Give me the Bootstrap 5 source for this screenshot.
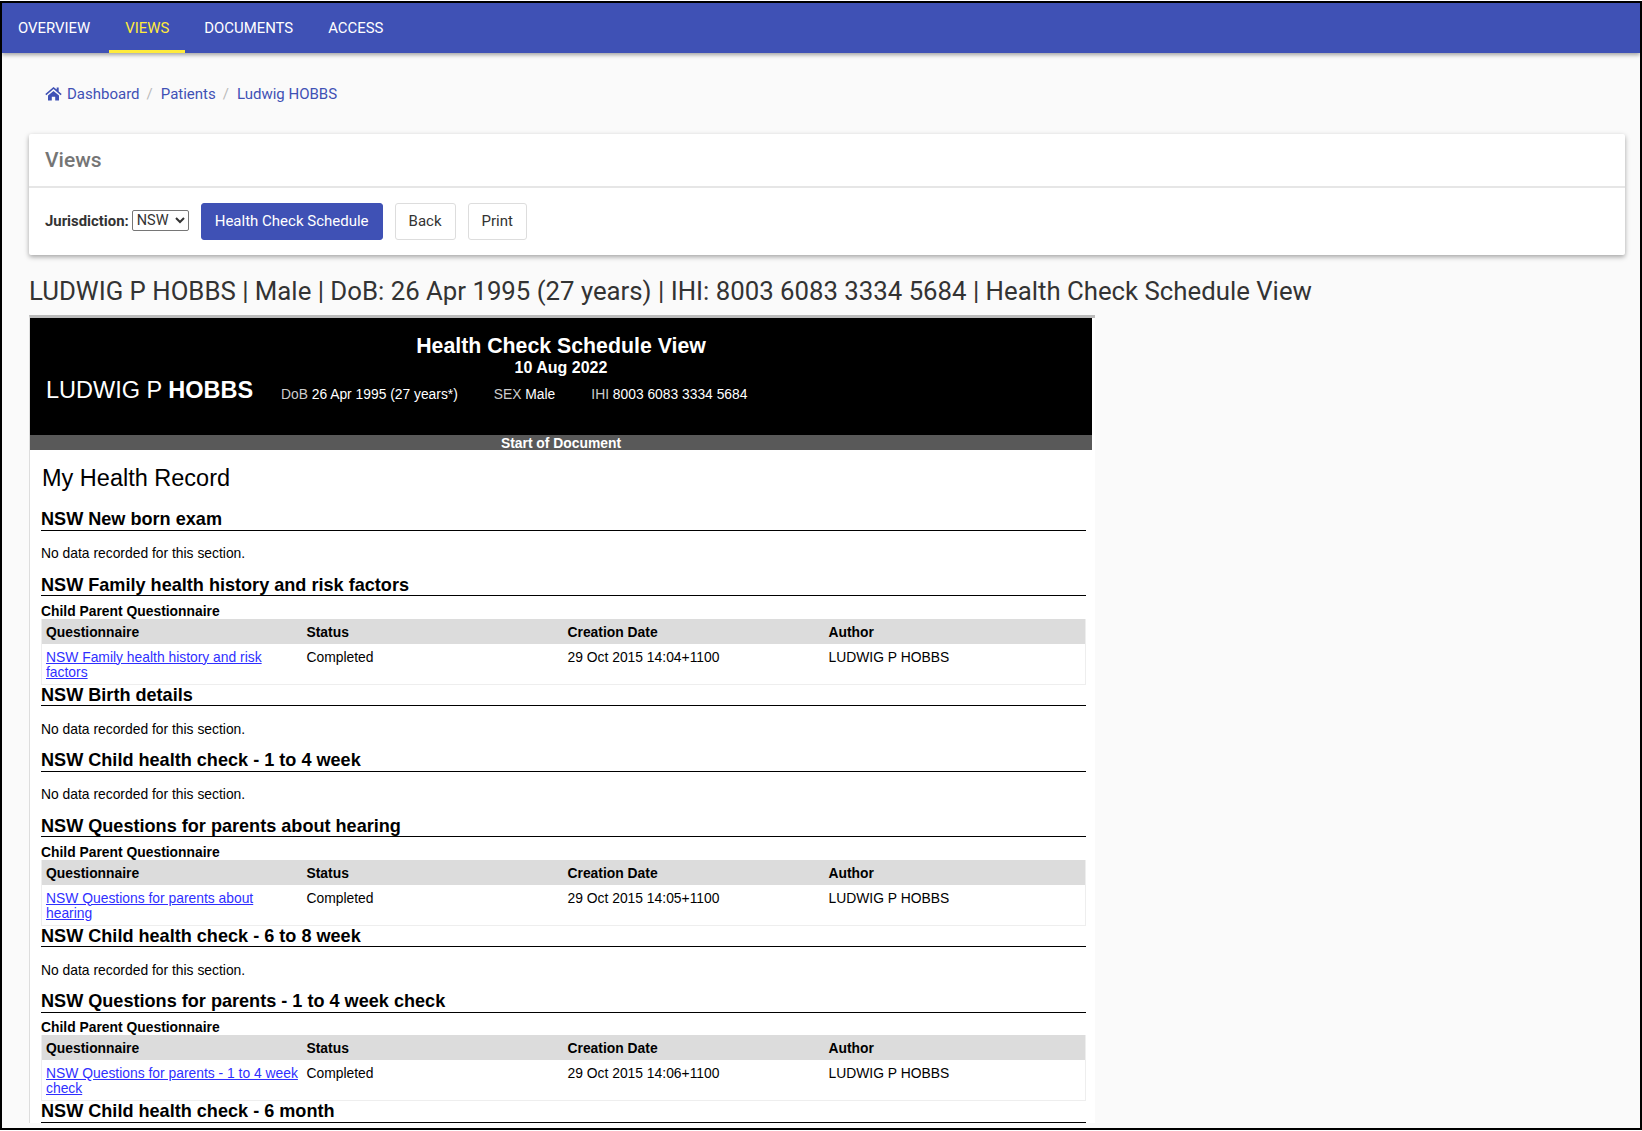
<!doctype html>
<html lang="en">
<head>
  <meta charset="utf-8">
  <title>Health Check Schedule View</title>
  <meta name="viewport" content="width=device-width, initial-scale=1">
  <link href="https://cdn.jsdelivr.net/npm/bootstrap@5.3.3/dist/css/bootstrap.min.css" rel="stylesheet">
  <style>
    html, body { height: 100%; background: #fff; overflow: hidden; }
    body { font-family: Roboto, "Liberation Sans", sans-serif; }
    .app-frame { height: 1129px; margin: 1px 0 0 0; border: 2px solid #000; background: #fafafa; overflow: hidden; }
    .app-nav { height: 50px; padding: 0; background: #3f51b5; box-shadow: 0 2px 4px rgba(0,0,0,.35); gap: 3px; }
    .app-nav .nav-link { height: 50px; padding: 0 16px; line-height: 51px; font-size: 14.9px; color: #fff; text-transform: uppercase; border-bottom: 3px solid transparent; }
    .app-nav .nav-link.active { color: #ffeb3b; border-bottom-color: #ffeb3b; }
    .app-main { padding: 0 15px 0 27px; }
    .crumbs { height: 81px; margin: 0; padding: 30px 0 0 16px; font-size: 15px; line-height: 22px; }
    .crumbs a { color: #3f51b5; text-decoration: none; }
    .crumbs .breadcrumb-item + .breadcrumb-item { padding-left: 7px; }
    .crumbs .breadcrumb-item + .breadcrumb-item::before { padding-right: 8px; color: #bbb; }
    .crumbs svg { margin-right: 5px; vertical-align: -2px; }
    .views-card { border: 0; border-radius: 2px; box-shadow: 0 2px 5px rgba(0,0,0,.35); }
    .views-card .card-header { height: 54px; padding: 0 16px; background: #fff; border-bottom: 2px solid #e6e6e6; font-size: 21px; font-weight: 500; line-height: 52px; color: #757575; }
    .views-card .card-body { height: 67px; padding: 15px 16px 16px; gap: 12px; }
    .juris-label { font-size: 14.9px; font-weight: 700; color: #333; margin: 0 3px 0 0; }
    .juris-select { height: 21px; width: 57px; font-size: 14.5px; font-family: Roboto, sans-serif; border: 1px solid #767676; border-radius: 2px; background: #fff; color: #333; }
    .btn-app { height: 37px; padding: 0 13px; font-size: 15px; line-height: 35px; border-radius: 3px; color: #333; background: #fff; border: 1px solid #ddd; }
    .btn-app.is-main { background: #3f51b5; border-color: #3f51b5; color: #fff; }
    .patient-line { margin: 17px 0 5px; font-size: 25.78px; font-weight: 400; line-height: 38px; color: #333; white-space: nowrap; }
    .doc-pane { width: 1066px; border-top: 3px solid #bbb; border-left: 1px solid #ddd; background: #fff; font-family: "Liberation Sans", Arial, sans-serif; font-size: 13.87px; color: #000; }
    .doc-inner { width: 1062px; background: #fff; }
    .doc-head { height: 117px; background: #000; color: #fff; text-align: center; padding-top: 16px; }
    .doc-title { font-size: 21.3px; font-weight: 700; line-height: 25px; }
    .doc-date { font-size: 16px; font-weight: 700; line-height: 18px; }
    .doc-person { padding: 0 0 0 16px; text-align: left; align-items: center; height: 26px; gap: 36px; }
    .doc-name { font-size: 23.5px; line-height: 28px; width: 199px; white-space: nowrap; }
    .doc-fact { font-size: 13.83px; color: #ccc; white-space: nowrap; margin-top: 8px; }
    .doc-fact b { font-weight: 400; color: #fff; }
    .doc-bar { height: 15px; background: #595959; color: #fff; text-align: center; font-weight: 700; line-height: 16px; }
    .doc-body { padding: 0 6px 0 11px; }
    .doc-record { font-size: 23.5px; font-weight: 400; margin: 0; padding: 12px 0 0 1px; height: 59px; line-height: 32px; }
    .doc-sec { margin: 0; height: 21.5px; font-size: 18.1px; font-weight: 700; line-height: 20px; border-bottom: 1.5px solid #000; }
    .doc-none { margin: 0; padding: 15.5px 0 13.5px; line-height: 15px; }
    .doc-sub { margin: 7.5px 0 0; font-size: 13.87px; font-weight: 700; line-height: 15px; height: 15px; }
    .doc-tbl { width: 100%; table-layout: fixed; margin: 0; border: 1px solid #eee; border-top: 0; }
    .doc-tbl th { background: #dcdcdc; padding: 6px 2px 4px 4px; line-height: 15px; font-weight: 700; }
    .doc-tbl td { padding: 6px 2px 4px 4px; line-height: 15px; vertical-align: top; height: 40px; }
    .doc-tbl a { color: #2f2fff; }
  </style>
</head>
<body>
<div class="app-frame">

  <!-- Top navigation -->
  <nav class="navbar app-nav justify-content-start">
    <a class="nav-link" href="#">Overview</a>
    <a class="nav-link active" href="#">Views</a>
    <a class="nav-link" href="#">Documents</a>
    <a class="nav-link" href="#">Access</a>
  </nav>

  <div class="app-main">
    <ol class="breadcrumb crumbs">
      <li class="breadcrumb-item"><a href="#"><svg width="17" height="15" viewBox="0 0 17 15" fill="#3f51b5"><path d="M8.5 1 .3 8l1 1.2L8.5 3.1l7.2 6.1 1-1.2-3-2.6V1.500h-2v2z"/><path d="M3 9.600V14.500h3.800V10.800h3.400v3.700H14V9.600L8.500 4.900z"/></svg>Dashboard</a></li>
      <li class="breadcrumb-item"><a href="#">Patients</a></li>
      <li class="breadcrumb-item"><a href="#">Ludwig HOBBS</a></li>
    </ol>

    <div class="card views-card">
      <div class="card-header">Views</div>
      <div class="card-body d-flex align-items-center">
        <div class="d-flex align-items-center">
          <label class="juris-label">Jurisdiction:</label>
          <select class="juris-select"><option>NSW</option></select>
        </div>
        <button class="btn btn-app is-main" type="button">Health Check Schedule</button>
        <button class="btn btn-app" type="button">Back</button>
        <button class="btn btn-app" type="button">Print</button>
      </div>
    </div>

    <h4 class="patient-line">LUDWIG P HOBBS | Male | DoB: 26 Apr 1995 (27 years) | IHI: 8003 6083 3334 5684 | Health Check Schedule View</h4>

    <!-- Embedded document -->
    <div class="doc-pane">
      <div class="doc-inner">
        <div class="doc-head">
          <div class="doc-title">Health Check Schedule View</div>
          <div class="doc-date">10 Aug 2022</div>
          <div class="doc-person d-flex">
            <div class="doc-name">LUDWIG P <strong>HOBBS</strong></div>
            <div class="doc-fact">DoB <b>26 Apr 1995 (27 years*)</b></div>
            <div class="doc-fact">SEX <b>Male</b></div>
            <div class="doc-fact">IHI <b>8003 6083 3334 5684</b></div>
          </div>
        </div>
        <div class="doc-bar">Start of Document</div>
        <div class="doc-body">
          <h2 class="doc-record">My Health Record</h2>

          <h3 class="doc-sec">NSW New born exam</h3>
          <p class="doc-none">No data recorded for this section.</p>

          <h3 class="doc-sec">NSW Family health history and risk factors</h3>
          <div class="doc-sub">Child Parent Questionnaire</div>
          <table class="doc-tbl">
            <tr><th>Questionnaire</th><th>Status</th><th>Creation Date</th><th>Author</th></tr>
            <tr><td><a href="#">NSW Family health history and risk factors</a></td><td>Completed</td><td>29 Oct 2015 14:04+1100</td><td>LUDWIG P HOBBS</td></tr>
          </table>

          <h3 class="doc-sec">NSW Birth details</h3>
          <p class="doc-none">No data recorded for this section.</p>

          <h3 class="doc-sec">NSW Child health check - 1 to 4 week</h3>
          <p class="doc-none">No data recorded for this section.</p>

          <h3 class="doc-sec">NSW Questions for parents about hearing</h3>
          <div class="doc-sub">Child Parent Questionnaire</div>
          <table class="doc-tbl">
            <tr><th>Questionnaire</th><th>Status</th><th>Creation Date</th><th>Author</th></tr>
            <tr><td><a href="#">NSW Questions for parents about hearing</a></td><td>Completed</td><td>29 Oct 2015 14:05+1100</td><td>LUDWIG P HOBBS</td></tr>
          </table>

          <h3 class="doc-sec">NSW Child health check - 6 to 8 week</h3>
          <p class="doc-none">No data recorded for this section.</p>

          <h3 class="doc-sec">NSW Questions for parents - 1 to 4 week check</h3>
          <div class="doc-sub">Child Parent Questionnaire</div>
          <table class="doc-tbl">
            <tr><th>Questionnaire</th><th>Status</th><th>Creation Date</th><th>Author</th></tr>
            <tr><td><a href="#">NSW Questions for parents - 1 to 4 week check</a></td><td>Completed</td><td>29 Oct 2015 14:06+1100</td><td>LUDWIG P HOBBS</td></tr>
          </table>

          <h3 class="doc-sec">NSW Child health check - 6 month</h3>
        </div>
      </div>
    </div>
  </div>
</div>
<script src="https://cdn.jsdelivr.net/npm/bootstrap@5.3.3/dist/js/bootstrap.bundle.min.js"></script>
</body>
</html>
